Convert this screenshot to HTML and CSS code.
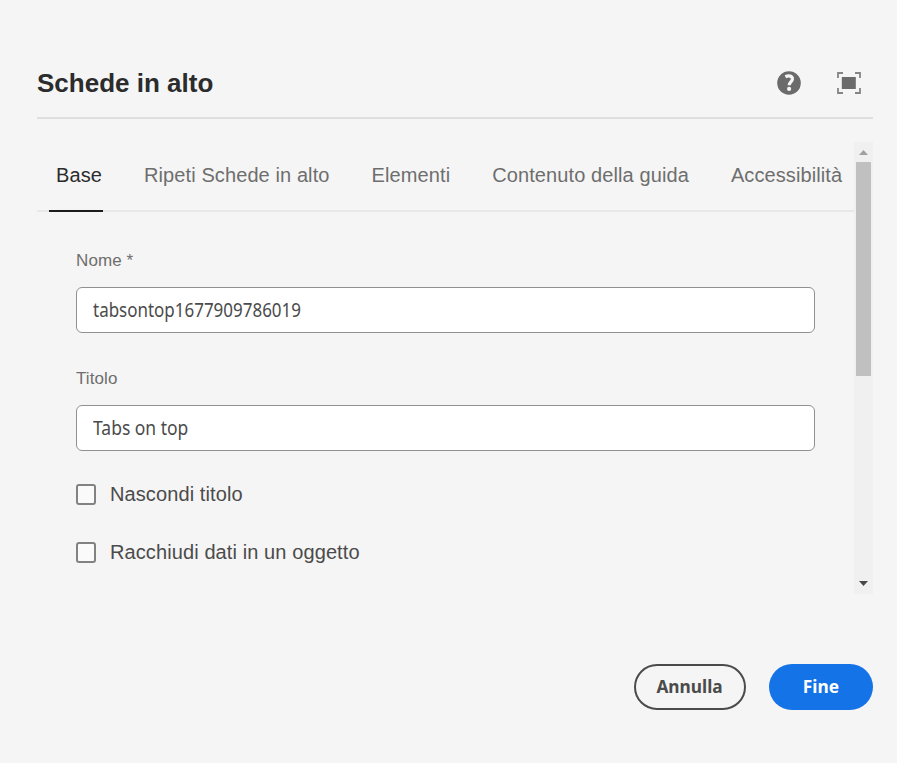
FILE: index.html
```html
<!DOCTYPE html>
<html lang="it">
<head>
<meta charset="utf-8">
<title>Schede in alto</title>
<link rel="stylesheet" href="styles.css">
</head>
<body>
<main class="dialog">
  <header class="header">
    <h1 class="title">Schede in alto</h1>
    <div class="actions">
      <svg width="24" height="24" viewBox="0 0 24 24" role="img" aria-label="Guida">
        <circle cx="12" cy="12" r="11.8" fill="#6b6b6b"/>
        <path d="M8.4 5.8c3.8-1.9 7-.6 7 2.2 0 2.8-3.2 3-3.2 6.2" fill="none" stroke="#f5f5f5" stroke-width="3.2"/>
        <circle cx="12.1" cy="17.9" r="2.1" fill="#f5f5f5"/>
      </svg>
      <svg width="24" height="22" viewBox="0 0 24 22" role="img" aria-label="Schermo intero">
        <path d="M1 6V1h5M18 1h5v5M23 16v5h-5M6 21H1v-5" fill="none" stroke="#858585" stroke-width="1.8"/>
        <rect x="4.8" y="5" width="14" height="12" fill="#6b6b6b"/>
      </svg>
    </div>
  </header>
  <div class="pane">
    <div class="content">
      <nav class="tabs">
        <a class="tab selected"><span>Base</span></a>
        <a class="tab repeat">Ripeti Schede in alto</a>
        <a class="tab items">Elementi</a>
        <a class="tab help">Contenuto della guida</a>
        <a class="tab access">Accessibilità</a>
      </nav>
      <form class="form">
        <label class="label">Nome *</label>
        <div class="field name"><span>tabsontop1677909786019</span></div>
        <label class="label second">Titolo</label>
        <div class="field text"><span>Tabs on top</span></div>
        <label class="check"><i class="box"></i><span>Nascondi titolo</span></label>
        <label class="check"><i class="box"></i><span>Racchiudi dati in un oggetto</span></label>
      </form>
    </div>
    <div class="scrollbar">
      <svg class="up" width="9" height="5" viewBox="0 0 9 5"><path d="M0 5 4.5 0 9 5z" fill="#a0a0a0"/></svg>
      <div class="thumb"></div>
      <svg class="down" width="9" height="5" viewBox="0 0 9 5"><path d="M0 0h9L4.5 5z" fill="#484848"/></svg>
    </div>
  </div>
  <footer class="footer">
    <div class="button cancel"><span>Annulla</span></div>
    <div class="button done"><span>Fine</span></div>
  </footer>
</main>
</body>
</html>
```
FILE: styles.css
```css
* { box-sizing: border-box; }
body {
  margin: 0;
  background: #f5f5f5;
  font-family: "Liberation Sans", Arial, sans-serif;
  color: #4b4b4b;
}
.dialog { height: 763px; padding: 48px 24px 0 37px; }
.header {
  display: flex;
  justify-content: space-between;
  align-items: center;
  height: 71px;
  padding-right: 12px;
  border-bottom: 2px solid #dfdfdf;
}
.title { margin: 0; font-size: 26px; line-height: 30px; color: #2c2c2c; }
.actions { display: flex; align-items: center; gap: 36px; }
.actions svg { display: block; }
.pane { display: flex; height: 452px; margin-top: 23px; }
.content { flex: 1; }
.tabs {
  display: flex;
  height: 70px;
  padding-left: 12px;
  border-bottom: 2px solid #e8e8e8;
  font-size: 20px;
  line-height: 24px;
  letter-spacing: .1px;
  white-space: nowrap;
}
.tab { padding-top: 21px; height: 70px; color: #6e6e6e; }
.selected {
  width: 54px;
  padding-left: 7px;
  color: #2c2c2c;
  border-bottom: 2px solid #1c1c1c;
}
.repeat { margin-left: 41px; }
.items, .help, .access { margin-left: 42px; }
.form { padding: 37px 39px 0 39px; }
.label {
  display: block;
  font-size: 17px;
  line-height: 24px;
  letter-spacing: .1px;
  color: #6e6e6e;
}
.field {
  height: 46px;
  margin-top: 14px;
  padding-left: 16px;
  border: 1px solid #909090;
  border-radius: 6px;
  background: #fff;
  font: 19px/44px "Noto Sans", sans-serif;
  white-space: nowrap;
}
.field span { display: inline-block; transform-origin: left; }
.name span { transform: scaleX(.893); }
.text span { transform: scaleX(.92); }
.second { margin-top: 34px; }
.check {
  display: flex;
  align-items: center;
  height: 24px;
  margin-top: 34px;
  gap: 14px;
  font-size: 20px;
  letter-spacing: .1px;
  white-space: nowrap;
}
.field + .check { margin-top: 31px; }
.box {
  width: 20px;
  height: 21px;
  border: 2px solid #828282;
  border-radius: 3px;
  background: #fafafa;
}
.scrollbar {
  display: flex;
  flex-direction: column;
  align-items: center;
  width: 19px;
  padding: 8px 0;
  background: #f0f0f0;
}
.scrollbar svg { display: block; }
.thumb { width: 15px; height: 214px; margin-top: 7px; background: #c0c0c0; }
.down { margin-top: auto; }
.footer { display: flex; justify-content: flex-end; gap: 23px; margin-top: 70px; }
.button {
  height: 46px;
  border-radius: 23px;
  text-align: center;
  font: bold 18px/45px "Noto Sans", sans-serif;
}
.button span { display: inline-block; transform: scaleX(.96); }
.cancel { width: 112px; border: 2px solid #4b4b4b; line-height: 41px; }
.done { width: 104px; background: #1473e6; color: #fff; }
```
